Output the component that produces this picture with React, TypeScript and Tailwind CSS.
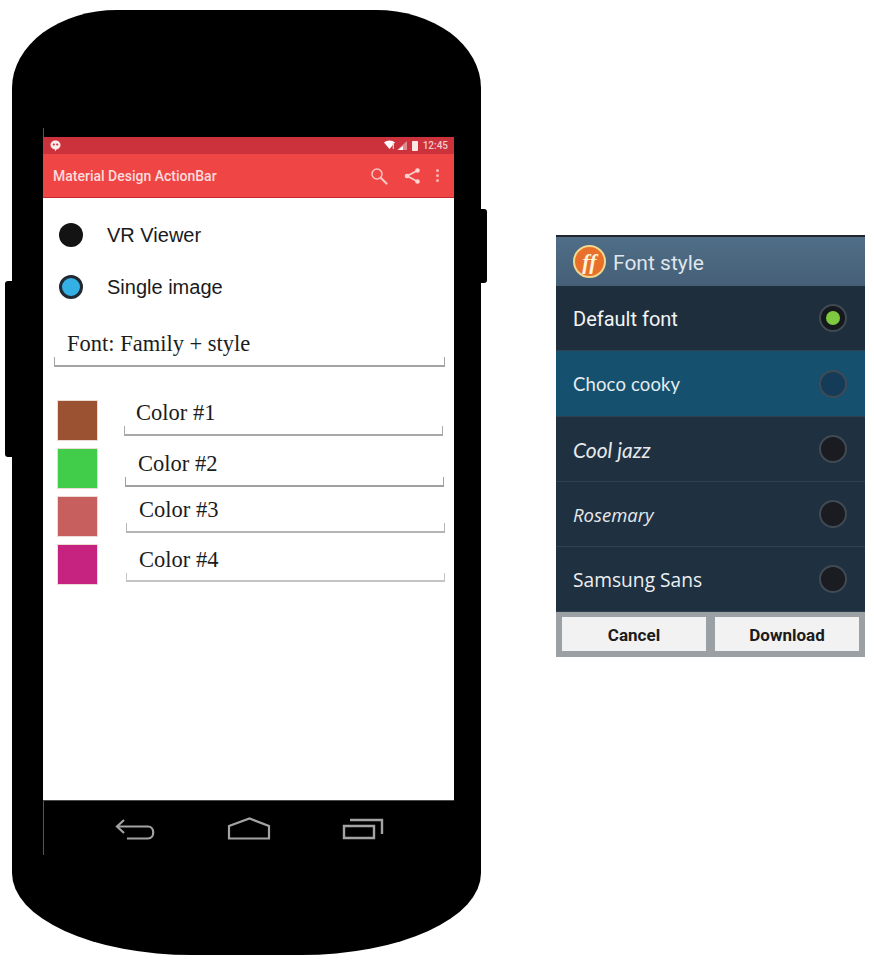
const colorRows = [
  { label: "Color #1", swatch: "bg-[#9b5232]", field: "mt-0 ml-[26px]", text: "pl-[12px]", rule: "h-[10px] border-[#a8a8a8]" },
  { label: "Color #2", swatch: "bg-[#41cc49]", field: "mt-[3px] ml-[27px]", text: "pl-[13px]", rule: "h-[10px] border-[#a0a0a0]" },
  { label: "Color #3", swatch: "bg-[#c85f5f]", field: "mt-[1px] ml-[28px]", text: "pl-[13px]", rule: "h-[10px] border-[#b4b4b4]" },
  { label: "Color #4", swatch: "bg-[#c5237f]", field: "mt-[3px] ml-[28px]", text: "pl-[13px]", rule: "h-[9px] border-[#c4c4c4]" },
];

const fontRows = [
  { label: "Default font", row: "h-[65px] bg-[#1f2e3c]", text: "font-['Roboto',sans-serif] text-[20px] text-[#f2f4f5]", dot: "bg-[#15181c]", selected: true },
  { label: "Choco cooky", row: "h-[66px] bg-[#16506f]", text: "font-['Lato',sans-serif] text-[18.5px] tracking-[0.15px] text-[#e4edf1]", dot: "bg-[#143c58]", selected: false },
  { label: "Cool jazz", row: "h-[65px] bg-[#1f3040]", text: "font-['Lato',sans-serif] text-[21px] italic text-[#e6e9ec]", dot: "bg-[#1a1c21]", selected: false },
  { label: "Rosemary", row: "h-[65px] bg-[#1f3040]", text: "font-['Open_Sans',sans-serif] text-[18.5px] italic text-[#e6e9ec]", dot: "bg-[#1a1c21]", selected: false },
  { label: "Samsung Sans", row: "h-[65px] bg-[#1f3040]", text: "font-['Open_Sans',sans-serif] text-[19.2px] text-[#eceff1]", dot: "bg-[#1a1c21]", selected: false },
];

function StatusBar() {
  return (
    <div className="flex h-[17px] items-center justify-between bg-[#cc323c] pl-[7px] pr-[6px]">
      <svg width="11" height="12" viewBox="0 0 11 12">
        <path d="M5.5 0.5C8.3 0.5 10.5 2.5 10.5 5c0 2.4-2.1 4.1-4 4.6L5 11.5V9.6C2.600 9.300 0.500 7.500 0.500 5c0-2.500 2.200-4.500 5-4.500z" fill="#fbeaea" />
        <circle cx="3.800" cy="4.500" r="1.100" fill="#cc323c" />
        <circle cx="7.200" cy="4.500" r="1.100" fill="#cc323c" />
      </svg>
      <div className="flex items-center">
        <svg width="23" height="11" viewBox="0 0 23 11">
          <path d="M0 2.500C3 -0.200 8 -0.200 11 2.500L5.500 9z" fill="#fff" />
          <path d="M10 3v6h-1.300V3z" fill="#f3c4c6" />
          <path d="M23 1v9h-10z" fill="#e08a90" />
          <path d="M19 6v4h-5z" fill="#fff" />
        </svg>
        <div className="ml-[5px] h-[10px] w-[6px] rounded-[1px] bg-[#fbe7e7]" />
        <span className="ml-[5px] font-['Roboto',sans-serif] text-[10px] leading-none font-medium text-[#f2c9cb]">12:45</span>
      </div>
    </div>
  );
}

function ActionBar() {
  return (
    <div className="flex h-[44px] items-center justify-between border-b border-[#c8252c] bg-[#f04545] pl-[10px] pr-[15px]">
      <span className="mt-[1px] font-['Roboto',sans-serif] text-[14px] font-medium text-[#fbdcdc]">Material Design ActionBar</span>
      <div className="flex items-center">
        <svg width="18" height="18" viewBox="0 0 18 18" fill="none" stroke="#f9c4c4" strokeLinecap="round">
          <circle cx="7" cy="7" r="5" strokeWidth="1.500" />
          <path d="M11 11l5.500 5.500" strokeWidth="2.200" />
        </svg>
        <svg className="ml-[16px]" width="17" height="18" viewBox="0 0 17 18" fill="#fbd4d4" stroke="#fbd4d4">
          <path d="M13.500 3.500L3 9l10.500 5.500" fill="none" strokeWidth="1.500" />
          <circle cx="13.500" cy="3.500" r="2.300" stroke="none" />
          <circle cx="3" cy="9" r="2.300" stroke="none" />
          <circle cx="13.500" cy="14.500" r="2.300" stroke="none" />
        </svg>
        <div className="ml-[15px] flex flex-col gap-[2px]">
          <div className="size-[3px] rounded-full bg-[#f7b4b4]" />
          <div className="size-[3px] rounded-full bg-[#f7b4b4]" />
          <div className="size-[3px] rounded-full bg-[#f7b4b4]" />
        </div>
      </div>
    </div>
  );
}

function Field({ label, text, rule }: { label: string; text: string; rule: string }) {
  return (
    <div className="w-[319px]">
      <div className={`font-['Liberation_Serif',serif] text-[22.5px] leading-[26px] text-[#1c1c1c] ${text}`}>{label}</div>
      <div className={`border-x border-b-2 ${rule}`} />
    </div>
  );
}

function Screen() {
  return (
    <div className="flex h-[602px] flex-col bg-white">
      <div className="mt-[11px] flex h-[52px] items-center pl-[16px]">
        <div className="size-[24px] rounded-full bg-[#131313]" />
        <span className="ml-[24px] font-['Liberation_Sans',sans-serif] text-[20px] text-[#1a1a1a]">VR Viewer</span>
      </div>
      <div className="flex h-[52px] items-center pl-[16px]">
        <div className="size-[24px] rounded-full border-[3px] border-[#1f2a33] bg-[#35b0e4]" />
        <span className="ml-[24px] font-['Liberation_Sans',sans-serif] text-[20px] text-[#1a1a1a]">Single image</span>
      </div>
      <div className="ml-[11px] mt-[18px] w-[391px]">
        <div className="pl-[13px] font-['Liberation_Serif',serif] text-[22.5px] leading-[26px] text-[#1c1c1c]">Font: Family + style</div>
        <div className="h-[10px] border-x border-b-2 border-[#a4a4a4]" />
      </div>
      <div className="mt-[33px] flex flex-col gap-[7px] pl-[14px]">
        {colorRows.map((c) => (
          <div key={c.label} className="flex items-start">
            <div className={`h-[41px] w-[41px] shrink-0 border border-[#ecdcd4] ${c.swatch}`} />
            <div className={c.field}>
              <Field label={c.label} text={c.text} rule={c.rule} />
            </div>
          </div>
        ))}
      </div>
    </div>
  );
}

function NavBar() {
  return (
    <div className="h-[55px] border-t border-[#4a4a4a]">
      <div className="flex h-[54px] items-start border-l border-[#555] pl-[70px] pt-[16px]">
        <svg width="42" height="26" viewBox="0 0 42 26" fill="none" stroke="#a3a3a3" strokeWidth="2.200">
          <path d="M10 3L3 9.500l7 6.500" />
          <path d="M3 9.500h31c7 0 7 12 0 12h-21" />
        </svg>
        <svg className="ml-[71px]" width="44" height="26" viewBox="0 0 44 26" fill="none" stroke="#a3a3a3" strokeWidth="2.200">
          <path d="M2 21.500V9L22.500 1.500 42 9v12.500z" />
        </svg>
        <svg className="ml-[71px]" width="42" height="26" viewBox="0 0 42 26" fill="none" stroke="#a3a3a3" strokeWidth="2.400">
          <path d="M2 9h30v12H2z" />
          <path d="M8 3h32v14" />
        </svg>
      </div>
    </div>
  );
}

function Phone() {
  return (
    <div className="relative mt-[10px] ml-[12px] h-[945px] w-[469px] shrink-0 rounded-t-[105px_78px] rounded-b-[180px_82px] bg-black pl-[31px] pt-[127px]">
      {/* side buttons */}
      <div className="absolute -left-[7px] top-[271px] h-[176px] w-[8px] rounded-l-[3px] bg-black" />
      <div className="absolute -right-[6px] top-[199px] h-[74px] w-[7px] rounded-r-[3px] bg-black" />
      <div className="absolute left-[31px] top-[118px] h-[9px] w-px bg-[#555]" />
      <div className="w-[411px]">
        <StatusBar />
        <ActionBar />
        <Screen />
        <NavBar />
      </div>
    </div>
  );
}

function FontDialog() {
  return (
    <div className="ml-[75px] mt-[235px] w-[309px] shrink-0 border-t-2 border-[#20262b]">
      <div className="flex h-[49px] items-center bg-gradient-to-b from-[#506e88] to-[#455f77] pl-[17px]">
        <div className="flex size-[33px] items-center justify-center rounded-full border-2 border-[#f3d78c] bg-[#e8702a] font-['Liberation_Serif',serif] text-[22px] leading-none font-bold italic text-[#fff3dc]">
          ff
        </div>
        <span className="ml-[7px] mt-[4px] font-['Roboto',sans-serif] text-[21px] text-[#dfe6ec]">Font style</span>
      </div>
      {fontRows.map((f) => (
        <div key={f.label} className={`flex items-center justify-between border-b border-[#30424f] pl-[17px] pr-[18px] ${f.row}`}>
          <span className={`mt-[2px] ${f.text}`}>{f.label}</span>
          <div className={`flex size-[28px] items-center justify-center rounded-full border-2 border-[#3f4a53] ${f.dot}`}>
            {f.selected && <div className="size-[14px] rounded-full bg-[#7ec93f]" />}
          </div>
        </div>
      ))}
      <div className="flex h-[45px] gap-[9px] bg-[#9aa0a3] px-[6px] pt-[5px]">
        <button className="h-[34px] w-[144px] bg-[#f2f2f2] pt-[3px] font-['Roboto',sans-serif] text-[17px] font-bold text-[#1c1c1c]">Cancel</button>
        <button className="h-[34px] w-[144px] bg-[#f2f2f2] pt-[3px] font-['Roboto',sans-serif] text-[17px] font-bold text-[#1c1c1c]">Download</button>
      </div>
    </div>
  );
}

export default function App() {
  return (
    <div className="flex h-[968px] w-[874px] items-start overflow-hidden bg-white">
      <Phone />
      <FontDialog />
    </div>
  );
}
